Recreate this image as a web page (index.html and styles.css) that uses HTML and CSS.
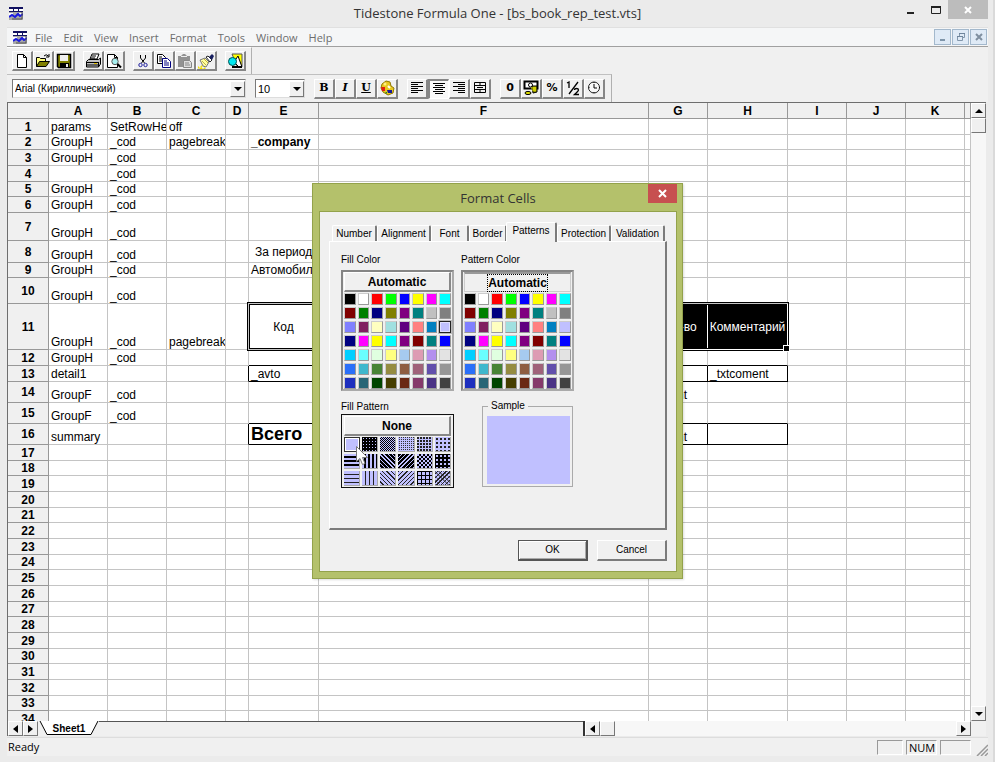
FILE: index.html
```html
<!DOCTYPE html>
<html lang="en">
<head>
<meta charset="utf-8">
<title>Tidestone Formula One</title>
<link rel="stylesheet" href="styles.css">
</head>
<body>
<svg width="0" height="0" class="defs" aria-hidden="true">
  <symbol id="app" viewBox="0 0 14 13"><path fill="#fff" d="M0 0h14v13H0z"/><path fill="#101060" d="M0 0h14v2H0zM0 4h14v1H0zM4 0h1v5H4zM9 0h1v5H9z"/><path fill="#a8a8a8" d="M0 5h14v8H0z"/><path fill="#fff" d="M0 6h4v3H0zM10 6h3v2h-3z"/><path d="M0 10l3-2 3 2 3-3 2 2 3-2" fill="none" stroke="#1a1ae0" stroke-width="2"/><path d="M3 12h10V5" fill="none" stroke="#555"/></symbol>
  <symbol id="left" viewBox="0 0 5 8"><path d="M5 0v8L0 4z"/></symbol>
  <symbol id="right" viewBox="0 0 5 8"><path d="M0 0v8l5-4z"/></symbol>
  <symbol id="up" viewBox="0 0 8 4"><path d="M0 4h8L4 0z"/></symbol>
  <symbol id="down" viewBox="0 0 8 4"><path d="M0 0h8L4 4z"/></symbol>
</svg>
<div class="window">
  <header class="titlebar">
    <svg class="app-icon"><use href="#app"/></svg>
    <h1>Tidestone Formula One - [bs_book_rep_test.vts]</h1>
    <div class="caption">
      <button aria-label="Minimize"><svg width="10" height="10"><path d="M1 7h7v2H1z" fill="#222"/></svg></button>
      <button aria-label="Maximize"><svg width="10" height="10"><path d="M.5 1.5h9v7h-9z" fill="none" stroke="#222"/><path d="M0 1h10v2H0z" fill="#222"/></svg></button>
      <button class="close" aria-label="Close"><svg width="8" height="8"><path d="M1 1l6 6M7 1L1 7" stroke="#fff" stroke-width="2"/></svg></button>
    </div>
  </header>
  <nav class="menubar">
    <svg class="app-icon"><use href="#app"/></svg>
    <button>File</button><button>Edit</button><button>View</button><button>Insert</button><button>Format</button><button>Tools</button><button>Window</button><button>Help</button>
    <div class="mdi">
      <button aria-label="Minimize document"><svg width="8" height="8"><path d="M1 6h5v2H1z" fill="#7f95aa"/></svg></button>
      <button aria-label="Restore document"><svg width="8" height="8"><path d="M2.5 3V.5h5v4H6M.5 3.5h5v4h-5z" fill="none" stroke="#8296ab"/><path d="M0 3h6v1H0zM2 0h6v1H2z" fill="#6f859c"/></svg></button>
      <button aria-label="Close document"><svg width="8" height="8"><path d="M1 1l6 6M7 1L1 7" stroke="#7f8fa0" stroke-width="2"/></svg></button>
    </div>
  </nav>
  <div class="bars">
  <div class="toolbar standard">
    <div class="group">
      <button class="tool" aria-label="New"><svg viewBox="0 0 16 16"><path d="M3.500 1.500h6l3 3v10h-9z" fill="#fff" stroke="#000"/><path d="M9.500 1.500v3h3" fill="none" stroke="#000"/></svg></button>
      <button class="tool" aria-label="Open"><svg viewBox="0 0 16 16"><path d="M1.500 13.500v-9h3l1 1h5v3" fill="#ffff80" stroke="#000"/><path d="M1.500 13.500l3-5h10l-3.500 5z" fill="#808000" stroke="#000"/><path d="M9 3q2-2.500 4.500 0M14 1v3h-3" fill="none" stroke="#000"/></svg></button>
      <button class="tool" aria-label="Save"><svg viewBox="0 0 16 16"><path d="M1.500 1.500h13v13h-12l-1-1z" fill="#808000" stroke="#000" stroke-width="1.500"/><path d="M4 2h8v6H4z" fill="#efefef"/><path d="M4 10h9v5H4z"/><path d="M10 11h2v3h-2z" fill="#eee"/></svg></button>
    </div>
    <div class="group">
      <button class="tool" aria-label="Print"><svg viewBox="0 0 16 16"><path d="M5 6l2-5h7l-2 5z" fill="#fff" stroke="#000"/><path d="M7 3h4M6 5h4" stroke="#000"/><path d="M1.500 8.500l2-2h10l2-1.500v6l-2 3h-12z" fill="#c0c0c0" stroke="#000"/><path d="M2 9.500h11M2 12h11M13.500 9v5" stroke="#000" fill="none"/><path d="M9 10h3v1H9z" fill="#e0c000"/></svg></button>
      <button class="tool" aria-label="Print preview"><svg viewBox="0 0 16 16"><path d="M1.500 1.500h7l3 3v10h-10z" fill="#fff" stroke="#000"/><path d="M8.500 1.500v3h3" fill="none" stroke="#000"/><circle cx="9" cy="8.500" r="3.200" fill="#a8f0f0" stroke="#555"/><path d="M11.500 11l3.500 3.500" stroke="#000" stroke-width="2"/></svg></button>
    </div>
    <div class="group">
      <button class="tool" aria-label="Cut"><svg viewBox="0 0 16 16"><path d="M5.500 2v3l4 5M10.500 2v3l-4 5" fill="none" stroke="#000"/><circle cx="5.500" cy="12" r="1.700" fill="none" stroke="#2020a0"/><circle cx="10.500" cy="12" r="1.700" fill="none" stroke="#2020a0"/></svg></button>
      <button class="tool" aria-label="Copy"><svg viewBox="0 0 16 16"><path d="M1.500 1.500h5l3 3v6h-8z" fill="#fff" stroke="#000"/><path d="M3 4h3M3 6h4M3 8h4" stroke="#000"/><path d="M6.500 5.500h5l3 3v6h-8z" fill="#fff" stroke="#000080"/><path d="M8 8h3M8 10h5M8 12h5" stroke="#000080"/></svg></button>
      <button class="tool" aria-label="Paste"><svg viewBox="0 0 16 16"><path d="M1 3h3l2-2h2l2 2h3v11H1z" fill="#929292"/><path d="M4 3h6v1H4z" fill="#eee"/><path d="M6.500 7.500h6l2 2v5h-8z" fill="#ddd" stroke="#888"/><path d="M8 10h4M8 12h5" stroke="#888"/></svg></button>
      <button class="tool" aria-label="Format painter"><svg viewBox="0 0 16 16"><path d="M2 7l5-2 4 4-3 5-3-1z" fill="#ffffa0" stroke="#777"/><path d="M4 8l4 4M6 6l4 4" stroke="#c0b040"/><path d="M8 4l2-1 4 4-2 2z" fill="#fff" stroke="#222"/><path d="M11 4l3-3 2 2-2 4z" fill="#182060"/><path d="M0 14h1v1H0zM3 13h1v1H3zM2 15h2v1H2zM6 15h1v1H6z" fill="#f0e000" stroke="#f0e000"/></svg></button>
    </div>
    <div class="group">
      <button class="tool" aria-label="Drawing"><svg viewBox="0 0 16 16"><path d="M5 1h10v12h-5z" fill="#ff0" stroke="#555"/><path d="M7 9l4-6 4 11h-3z" fill="#fff" stroke="#000"/><circle cx="5.500" cy="8.500" r="4" fill="#00e8f0" stroke="#005050"/><path d="M5 14h10" stroke="#000" stroke-width="2"/></svg></button>
    </div>
  </div>
  <div class="toolbar formatting">
    <div class="combo font"><select aria-label="Font"><option>Arial (Кириллический)</option></select><span><svg width="8" height="4"><use href="#down"/></svg></span></div>
    <div class="combo size"><select aria-label="Font size"><option>10</option></select><span><svg width="8" height="4"><use href="#down"/></svg></span></div>
    <div class="group">
      <button class="tool serif">B</button>
      <button class="tool serif italic">I</button>
      <button class="tool serif under">U</button>
      <button class="tool" aria-label="Colors"><svg viewBox="0 0 16 16"><path d="M3 4l4-3 4 1 1 4 3 2-1 5-5 2-5-3-2-4z" fill="#e8c820" stroke="#907800"/><circle cx="6" cy="4" r="1.500" fill="#fff080"/><path d="M2 7h4v4H3z" fill="#e02010"/><path d="M8 10h5v3H9z" fill="#1818a0"/><path d="M9 6l2 2" stroke="#fff" stroke-width="2"/><path d="M6 12h2v2" fill="#209020"/></svg></button>
    </div>
    <div class="group">
      <button class="tool" aria-label="Align left"><svg viewBox="0 0 16 16"><path d="M2 2.500h12M2 4.500h7M2 6.500h12M2 8.500h7M2 10.500h12M2 12.500h7" stroke="#000"/></svg></button>
      <button class="tool pressed" aria-label="Center"><svg viewBox="0 0 16 16"><path d="M2 2.500h12M4 4.500h8M2 6.500h12M4 8.500h8M2 10.500h12M4 12.500h8" stroke="#000"/></svg></button>
      <button class="tool" aria-label="Align right"><svg viewBox="0 0 16 16"><path d="M2 2.500h12M7 4.500h7M2 6.500h12M7 8.500h7M2 10.500h12M7 12.500h7" stroke="#000"/></svg></button>
      <button class="tool" aria-label="Center across cells"><svg viewBox="0 0 16 16"><path d="M2.500 2.500h11v10h-11zM2 5.500h12M2 9.500h12M8 2v3.500M8 9.500V13M5 7.500h6" fill="none" stroke="#000"/></svg></button>
    </div>
    <div class="group">
      <button class="tool sans">0</button>
      <button class="tool" aria-label="Currency"><svg viewBox="0 0 16 16"><path d="M1.500 1.500h13v7h-13z" fill="#fff" stroke="#000" stroke-width="2"/><circle cx="7.500" cy="5" r="2" fill="#fff" stroke="#000"/><path d="M9 6h5v6l-4 1z" fill="#a0a000" stroke="#000"/><path d="M8 8h5M9 10h4" stroke="#ff0"/><ellipse cx="5" cy="13" rx="3" ry="1.600" fill="#d8d800" stroke="#000"/></svg></button>
      <button class="tool sans">%</button>
      <button class="tool" aria-label="Fraction"><svg viewBox="0 0 16 16"><path d="M2 3l2-1v6M13 2L4 14M9.500 10q0-1.500 2-1.500t2 1.500q0 1-4 4.500H14" fill="none" stroke="#000" stroke-width="1.300"/></svg></button>
      <button class="tool" aria-label="Date and time"><svg viewBox="0 0 16 16"><circle cx="8" cy="7.500" r="5.500" fill="#f8f8f8" stroke="#222"/><path d="M8 4v4h3" fill="none" stroke="#000"/><path d="M8 2v1M8 12v1M2.500 7.500h1M13 7.500h1" stroke="#000"/></svg></button>
    </div>
  </div>
  </div>
  <main class="workbook">
    <div class="sheet-area">
      <div class="sheet">
        <table>
          <colgroup><col class="c-num"><col class="c-std"><col class="c-std"><col class="c-std"><col class="c-d"><col class="c-e"><col class="c-f"><col class="c-std"><col class="c-h"><col class="c-std"><col class="c-std"><col class="c-std"><col></colgroup>
          <thead><tr><th></th><th>A</th><th>B</th><th>C</th><th>D</th><th>E</th><th>F</th><th>G</th><th>H</th><th>I</th><th>J</th><th>K</th><th></th></tr></thead>
          <tbody id="rows"></tbody>
        </table>
      </div>
      <div class="scroll vertical">
        <button aria-label="Scroll up"><svg width="8" height="4"><use href="#up"/></svg></button>
        <div class="thumb"></div>
        <button class="end" aria-label="Scroll down"><svg width="8" height="4"><use href="#down"/></svg></button>
      </div>
    </div>
    <div class="sheet-footer">
      <div class="sheet-tabs">
        <button class="nav" aria-label="Previous sheet"><svg width="5" height="8"><use href="#left"/></svg></button>
        <button class="nav" aria-label="Next sheet"><svg width="5" height="8"><use href="#right"/></svg></button>
        <button class="sheet-tab"><svg viewBox="0 0 60 15"><path d="M1 0l7 13.500h44L59 0z" fill="#fff"/><path d="M1 0l7 13.500h44L59 0" fill="none" stroke="#000"/></svg><span>Sheet1</span></button>
        <div class="tab-rest"></div>
      </div>
      <div class="scroll horizontal">
        <button aria-label="Scroll left"><svg width="5" height="8"><use href="#left"/></svg></button>
        <div class="thumb"></div>
        <button class="end" aria-label="Scroll right"><svg width="5" height="8"><use href="#right"/></svg></button>
      </div>
      <div class="corner"></div>
    </div>
  </main>
  <footer class="status">
    <span class="message">Ready</span>
    <span class="pane narrow"></span><span class="pane">NUM</span><span class="pane"></span>
    <svg class="grip" width="12" height="12"><path d="M1 12L12 1M5 12l7-7M9 12l3-3" stroke="#999" stroke-width="1.500"/></svg>
  </footer>
</div>
<div class="overlay">
  <section class="dialog" role="dialog" aria-labelledby="dlg-title">
    <header><h2 id="dlg-title">Format Cells</h2><button class="dlg-close" aria-label="Close dialog"><svg width="9" height="9"><path d="M1 1l7 7M8 1L1 8" stroke="#fff" stroke-width="2"/></svg></button></header>
    <div class="body">
      <div class="tabs" role="tablist">
        <button role="tab" class="t1">Number</button><button role="tab" class="t2">Alignment</button><button role="tab" class="t3">Font</button><button role="tab" class="t3">Border</button><button role="tab" class="t2 active">Patterns</button><button role="tab" class="t2">Protection</button><button role="tab" class="t2">Validation</button>
      </div>
      <div class="panel" role="tabpanel">
        <div class="choice">
          <h3>Fill Color</h3>
          <div class="palette"><button class="auto">Automatic</button><div class="swatches" data-selected="23"></div></div>
        </div>
        <div class="choice">
          <h3>Pattern Color</h3>
          <div class="palette"><button class="auto sunken"><span>Automatic</span></button><div class="swatches"></div></div>
        </div>
        <div class="choice">
          <h3 class="tight">Fill Pattern</h3>
          <div class="palette focused"><button class="auto">None</button><div class="patterns" id="patterns"></div>
            <svg class="cursor" viewBox="0 0 12 19"><path d="M.5.500v15l3.500-3 2.500 6 2.500-1-2.500-6h5z" fill="#fff" stroke="#777"/></svg>
          </div>
        </div>
        <fieldset><legend>Sample</legend><div class="sample"></div></fieldset>
      </div>
      <div class="actions"><button class="default">OK</button><button>Cancel</button></div>
    </div>
  </section>
</div>
<script src="app.js"></script>
</body>
</html>
```
FILE: styles.css
```css
* { box-sizing: border-box; }
html, body { height: 100%; }
body { margin: 0; background: #ebebeb; font: 12px/14px "Liberation Sans", sans-serif; color: #000; overflow: hidden; }
button, select { font: inherit; color: inherit; padding: 0; margin: 0; border: 0; background: none; border-radius: 0; }
h1, h2, h3 { margin: 0; font-weight: normal; }
.defs { position: absolute; }

.window { height: 100vh; display: flex; flex-direction: column; padding: 0 5px 6px 7px; border-right: 2px solid #dadada; }
.titlebar { height: 27px; flex: none; display: grid; grid-template-columns: 90px 1fr 90px; font: 13px/26px "Open Sans", sans-serif; color: #333; }
.titlebar h1 { font-size: 13px; text-align: center; }
.app-icon { width: 14px; height: 13px; margin: 7px 0 0 2px; }
.caption { display: flex; align-items: flex-start; }
.caption button { width: 25px; height: 19px; display: grid; place-items: center; flex: none; }
.caption .close { width: 40px; background: #bcbcbc; }
.menubar { height: 20px; flex: none; display: flex; align-items: center; gap: 11px; background: #f5f6f7; border-top: 1px solid #e0e0e0; border-bottom: 1px solid #a0a0a0; font: 11px/17px "Open Sans", sans-serif; color: #6d6d6d; }
.menubar .app-icon { margin: 0 -3px 0 6px; }
.mdi { margin-left: auto; display: flex; gap: 1px; padding-right: 1px; }
.mdi button { width: 17px; height: 16px; border: 1px solid #a3b8cc; background: #dfeaf6; display: grid; place-items: center; }

.bars { flex: none; display: flex; flex-direction: column; background: #f0f0f0; }
.toolbar { height: 28px; display: flex; align-items: center; align-self: flex-start; gap: 8px; padding: 0 5px; border-right: 1px solid #b0b0b0; }
.standard { height: 27px; border-top: 1px solid #fff; }
.formatting { border-top: 1px solid #c0c0c0; padding-right: 6px; gap: 9px; }
.group { display: flex; }
.tool { width: 21px; height: 20px; background: #f0f0f0; border: 1px solid #fff; border-right: 2px solid #868686; border-bottom: 2px solid #868686; display: grid; place-items: center; }
.tool svg { width: 16px; height: 16px; }
.pressed { background: #f8f8f8; border: 1px solid #fff; border-top: 2px solid #868686; border-left: 2px solid #868686; }
.serif { font: bold 11px/14px "DejaVu Serif", serif; }
.italic { font-style: italic; }
.under { text-decoration: underline; }
.sans { font: bold 11px/14px "DejaVu Sans", sans-serif; }
.combo { display: flex; height: 19px; background: #fff; border: 1px solid #7a7a7a; border-right-color: #ddd; border-bottom-color: #ddd; position: relative; }
.combo select { width: 100%; appearance: none; padding-left: 2px; font-size: 10px; outline: 0; }
.combo span { position: absolute; right: 0; top: 1px; bottom: 0; width: 15px; background: #f0f0f0; border: 1px solid #fff; border-right-color: #777; border-bottom-color: #777; display: grid; place-items: center; pointer-events: none; }
.font { width: 234px; }
.size { width: 50px; }
.size select { font-size: 11px; }

.workbook { flex: 1; min-height: 0; display: flex; flex-direction: column; border-left: 1px solid #6e6e6e; border-top: 1px solid #6e6e6e; margin-right: 2px; }
.sheet-area { flex: 1; min-height: 0; display: flex; }
.sheet { flex: 1; min-width: 0; overflow: hidden; background: #fff; }
table { table-layout: fixed; width: 100%; border-spacing: 0; }
.c-num { width: 41px; } .c-std { width: 59px; } .c-d { width: 23px; } .c-e { width: 70px; } .c-f { width: 330px; } .c-h { width: 80px; }
th { background: #f0f0f0; padding: 0; height: 16px; font-size: 12px; line-height: 14px; border-right: 1px solid #989898; border-bottom: 1px solid #989898; }
td { padding: 0 0 0 2px; height: 16px; line-height: 14px; border-right: 1px solid #c4c4c4; border-bottom: 1px solid #c4c4c4; vertical-align: bottom; white-space: nowrap; position: relative; overflow: hidden; }
td span { display: block; height: 14px; }
.r15 th, .r15 td { height: 15px; }
.r21 th, .r21 td { height: 21px; }
.r22 th, .r22 td { height: 22px; }
.r26 th, .r26 td { height: 26px; }
.r28 th, .r28 td { height: 28px; }
.r46 th, .r46 td { height: 46px; }
.spill { overflow: visible; }
.middle { vertical-align: middle; }
.indent { padding-left: 6px; }
.bold { font-weight: bold; }
.total { font-weight: bold; font-size: 18px; line-height: 18px; }
.total span { height: 19px; }
.line-b { border-bottom-color: #000; }
.line-r { border-right-color: #000; }
.center { text-align: center; vertical-align: middle; padding: 0; }
.inverse { background: #000; color: #fff; border-color: #fff; }
.frame { position: absolute; left: -2px; top: -2px; width: 542px; height: 49px; border: 3px double #000; z-index: 1; }
.frame::after { content: ""; position: absolute; right: -4px; bottom: -4px; width: 5px; height: 5px; background: #000; border: 1px solid #fff; }

.scroll { display: flex; background: #f7f7f7; }
.scroll button, .nav, .thumb { width: 15px; height: 15px; flex: none; background: #f0f0f0; border: 1px solid #fff; border-right-color: #777; border-bottom-color: #777; display: grid; place-items: center; }
.vertical { width: 15px; flex-direction: column; }
.vertical .end { margin-top: auto; }
.horizontal { flex: 1; }
.horizontal .end { margin-left: auto; }
.sheet-footer { height: 15px; flex: none; display: flex; background: #f0f0f0; }
.sheet-tabs { width: 59%; display: flex; border-right: 2px solid #333; }
.sheet-tab { position: relative; width: 60px; height: 15px; margin-left: 1px; }
.sheet-tab svg { position: absolute; left: 0; top: 0; width: 60px; height: 15px; }
.sheet-tab span { position: relative; font: bold 10px/14px "Liberation Sans", sans-serif; }
.tab-rest { flex: 1; border-top: 1px solid #555; }
.corner { width: 15px; }
.status { height: 19px; flex: none; display: flex; gap: 3px; align-items: center; background: #f0f0f0; border-top: 1px solid #ddd; font: 11px/16px "Open Sans", sans-serif; margin-top: 1px; }
.message { flex: 1; padding-left: 1px; }
.pane { width: 31px; height: 15px; line-height: 14px; padding-left: 2px; border: 1px solid #fff; border-left-color: #999; border-top-color: #999; }
.narrow { width: 26px; }
.grip { margin-left: 2px; align-self: flex-end; }

.overlay { position: absolute; inset: 0; display: grid; place-items: center; z-index: 10; }
.dialog { width: 371px; padding: 0 5px 6px 6px; background: #b4c16b; border: 1px solid #93a24b; font: 10px/14px "Liberation Sans", sans-serif; box-shadow: 1px 1px 2px #0002; }
.dialog header { height: 27px; display: grid; position: relative; }
.dialog h2 { font: 13px/28px "Open Sans", sans-serif; text-align: center; color: #333; }
.dlg-close { position: absolute; right: 0; top: 0; width: 29px; height: 19px; background: #c75050; display: grid; place-items: center; }
.body { background: #f0f0f0; border: 1px solid #93a24b; padding: 10px 9px 10px 9px; }
.tabs { display: flex; align-items: flex-end; height: 19px; padding-left: 3px; }
.tabs button { height: 16px; padding: 0; border-left: 1px solid #fff; border-top: 1px solid #fff; border-right: 2px solid #7b7b7b; border-radius: 2px 2px 0 0; }
.tabs .t1 { width: 45px; } .tabs .t2 { width: 54px; } .tabs .t3 { width: 38px; }
.tabs .active { width: 51px; height: 20px; margin: 0 0 -1px -1px; padding-bottom: 4px; background: #f0f0f0; position: relative; }
.panel { border: 1px solid #fff; border-right: 2px solid #7b7b7b; border-bottom: 2px solid #7b7b7b; height: 289px; padding: 10px 10px 10px 11px; display: grid; grid-template-columns: 113px 113px; column-gap: 7px; row-gap: 8px; align-content: start; }
.choice h3 { font-size: 10px; line-height: 15px; height: 18px; }
.choice .tight { height: 15px; }
.palette { position: relative; border: 2px solid #858585; border-right-color: #aaa; border-bottom-color: #aaa; padding: 0 1px; }
.focused { border: 1px solid #111; padding: 1px 2px; }
.auto { width: 100%; height: 20px; border: 1px solid #fff; border-right: 2px solid #888; border-bottom: 2px solid #888; font: bold 12px/16px "Liberation Sans", sans-serif; display: grid; place-items: center; margin-bottom: 1px; }
.sunken { border: 1px solid #ccc; border-top: 2px solid #999; }
.sunken span { outline: 1px dotted #000; }
.swatches { display: grid; grid-template-columns: repeat(8, 1fr); gap: 2px; }
.swatches button { height: 12px; border: 1px solid #ccc; border-right-color: #999; border-bottom-color: #999; }
.swatches .on { border: 1px solid #222; outline: 1px solid #bbb; box-shadow: inset 0 0 0 1px #e0e0ff; }
.patterns { display: grid; grid-template-columns: repeat(6, 1fr); gap: 2px; }
.patterns button { height: 15px; background-color: #c0c0ff; border: 0; border-right: 1px solid #aaa; border-bottom: 1px solid #aaa; }
.patterns .p0 { border: 1px solid #333; box-shadow: inset 0 0 0 1px #fff; }
.p1 { background: radial-gradient(circle, #c0c0ff 30%, #000 40%) 0 0/3px 3px; }
.p2 { background: repeating-conic-gradient(#000 0 25%, #c0c0ff 0 50%) 0 0/2px 2px; }
.p3 { background: conic-gradient(#333 25%, #c0c0ff 0) 0 0/2px 2px; }
.p4 { background: radial-gradient(circle at 1px 1px, #222 0 1px, #c0c0ff 1px) 0 0/3px 3px; }
.p5 { background: radial-gradient(circle at 2px 2px, #222 0 1px, #c0c0ff 1px) 0 0/4px 4px; }
.p6 { background: repeating-linear-gradient(#c0c0ff 0 2px, #000 2px 4px); }
.p7 { background: repeating-linear-gradient(90deg, #c0c0ff 0 2px, #000 2px 4px); }
.p8 { background: repeating-linear-gradient(45deg, #c0c0ff 0 1px, #000 1px 3px); }
.p9 { background: repeating-linear-gradient(-45deg, #c0c0ff 0 1px, #000 1px 3px); }
.p10 { background: repeating-conic-gradient(#000 0 25%, #c0c0ff 0 50%) 0 0/4px 4px; }
.p11 { background: radial-gradient(circle, #c0c0ff 25%, #000 45%) 0 0/4px 4px; }
.p12 { background: repeating-linear-gradient(#c0c0ff 0 3px, #222 3px 4px); }
.p13 { background: repeating-linear-gradient(90deg, #c0c0ff 0 3px, #222 3px 4px); }
.p14 { background: repeating-linear-gradient(45deg, #c0c0ff 0 2px, #222 2px 3px); }
.p15 { background: repeating-linear-gradient(-45deg, #c0c0ff 0 2px, #222 2px 3px); }
.p16 { background: repeating-linear-gradient(#000 0 1px, transparent 1px 4px), repeating-linear-gradient(90deg, #000 0 1px, #c0c0ff 1px 4px); }
.p17 { background: repeating-linear-gradient(45deg, #2228 0 1px, transparent 1px 3px), repeating-linear-gradient(-45deg, #222 0 1px, #c0c0ff 1px 3px); }
.cursor { position: absolute; left: 14px; top: 31px; width: 12px; height: 19px; }
fieldset { width: 91px; height: 88px; margin: 0 0 0 21px; padding: 3px 2px 3px 4px; border: 1px solid #aaa; }
legend { padding: 0 3px; margin-left: 1px; line-height: 14px; }
.sample { height: 68px; background: #c0c0ff; }
.actions { display: flex; justify-content: flex-end; gap: 9px; padding-top: 10px; }
.actions button { width: 70px; height: 21px; border: 1px solid #fff; border-right: 2px solid #7b7b7b; border-bottom: 2px solid #7b7b7b; }
.actions .default { border: 1px solid #555; border-right-width: 2px; border-bottom-width: 2px; box-shadow: inset 1px 1px #fff, inset -1px -1px #aaa; }
```
FILE: app.js
```js
// Row heights cycle through 16, 15 and 16 pixels unless given here.
const heights = { 7: 28, 8: 22, 9: 15, 10: 26, 11: 46, 12: 16, 13: 16, 14: 21, 15: 21, 16: 21 };
const cod = [2, 3, 4, 5, 6, 7, 8, 9, 10, 11, 12, 14, 15];
const cells = {
  A1: ["params"], B1: ["SetRowHe"], C1: ["off"],
  C2: ["pagebreak"], E2: ["_company", "bold"],
  E8: ["За период", "middle indent spill"], E9: ["Автомобиль"],
  C11: ["pagebreak"], E11: ["Код", "center spill"], F11: ["", "inverse"], G11: ["Кол-во", "center inverse"], H11: ["Комментарий", "center inverse"],
  D13: ["", "line-r"], A13: ["detail1"], E13: ["_avto", "line-r line-b"], F13: ["", "line-r line-b"], G13: ["", "line-r line-b"], H13: ["_txtcoment", "line-r line-b"],
  G14: ["_count"], A16: ["summary"],
  D16: ["", "line-r"], E16: ["Всего", "total line-r line-b"], F16: ["", "line-r line-b"], G16: ["_count", "line-r line-b"], H16: ["", "line-r line-b"]
};
for (const n of [2, 3, 5, 6, 7, 8, 9, 10, 11, 12]) cells["A" + n] = ["GroupH"];
for (const n of [14, 15]) cells["A" + n] = ["GroupF"];
for (const n of cod) cells["B" + n] = ["_cod"];
for (const n of [12, 15]) for (const c of "EFGH") cells[c + n] = ["", "line-b"];

const body = document.getElementById("rows");
for (let n = 1; n <= 34; n++) {
  const h = heights[n] || ((n < 7 ? n : n - 16) % 3 === 2 ? 15 : 16);
  const tr = document.createElement("tr");
  tr.className = "r" + h;
  let html = `<th>${n}</th>`;
  for (const c of "ABCDEFGHIJKL") {
    const [text, cls] = cells[c + n] || ["", ""];
    const frame = c + n === "E11" ? '<div class="frame"></div>' : "";
    html += `<td class="${cls || ""}">${text ? `<span>${text}</span>` : ""}${frame}</td>`;
  }
  tr.innerHTML = html;
  body.append(tr);
}

const colors = `000000 ffffff ff0000 00ff00 0000ff ffff00 ff00ff 00ffff
800000 008000 000080 808000 800080 008080 c0c0c0 808080
8080ff 802060 ffffc0 a0e0e0 600080 ff8080 0080c0 c0c0ff
000080 ff00ff ffff00 00ffff 800080 800000 008080 0000ff
00cfff 69ffff e0ffe0 ffff80 a6caf0 dd9cb3 b38fee e3e3e3
2a6ff9 3fb8cd 488436 958c41 8e5e42 a0627a 624fac 969696
1d2fbe 286676 004500 453e01 6a2813 85396a 4a3285 424242`.split(/\s+/);
for (const box of document.querySelectorAll(".swatches")) {
  colors.forEach((color, i) => {
    const b = document.createElement("button");
    b.style.backgroundColor = "#" + color;
    b.setAttribute("aria-label", "Color " + (i + 1));
    if (String(i) === box.dataset.selected) b.className = "on";
    box.append(b);
  });
}
for (let i = 0; i < 18; i++) {
  const b = document.createElement("button");
  b.className = "p" + i;
  b.setAttribute("aria-label", "Pattern " + (i + 1));
  document.getElementById("patterns").append(b);
}
```
